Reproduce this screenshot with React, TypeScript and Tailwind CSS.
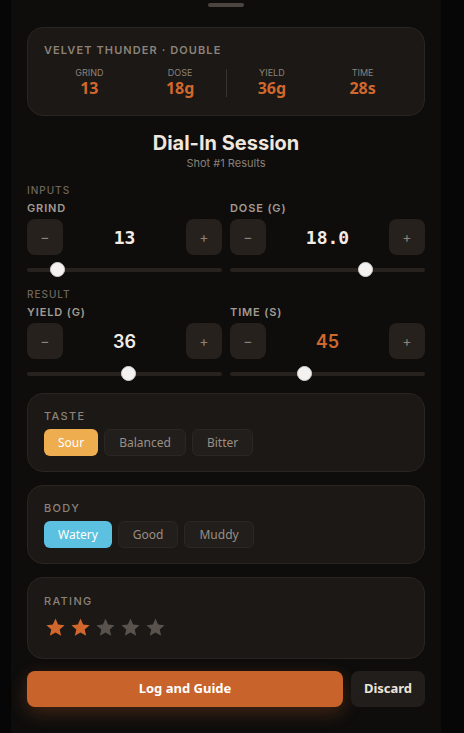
import React from 'react';

const ui = { fontFamily: 'Inter, "Noto Sans", sans-serif' };
const sys = { fontFamily: '"Noto Sans", "Open Sans", sans-serif' };
const mono = { fontFamily: '"DejaVu Sans Mono", "Liberation Mono", monospace' };

function Stepper({ label, value, pos, accent, monoVal }: { label: string; value: string; pos: number; accent?: boolean; monoVal?: boolean }) {
  return (
    <div>
      <div className="text-[11px] font-semibold tracking-[0.08em] text-[#a39a91] leading-none mb-[5px]" style={ui}>
        {label}
      </div>
      <div className="flex items-center justify-between">
        <button className="w-9 h-9 rounded-lg bg-[#26211d] text-[#8c837b] text-sm flex items-center justify-center" style={ui}>
          −
        </button>
        <div
          className={`text-[18px] font-semibold ${accent ? 'text-[#d2672d]' : 'text-[#f2ece6]'}`}
          style={monoVal ? mono : ui}
        >
          {value}
        </div>
        <button className="w-9 h-9 rounded-lg bg-[#26211d] text-[#8c837b] text-sm flex items-center justify-center" style={ui}>
          +
        </button>
      </div>
      <div className="relative h-[15px] mt-[7px] flex items-center">
        <div className="h-[4px] w-full rounded-full bg-[#27221e]" />
        <div
          className="absolute w-[15px] h-[15px] rounded-full bg-[#f4f2f0] border border-[#d8d4d0]"
          style={{ left: `${pos * 180}px` }}
        />
      </div>
    </div>
  );
}

function Chips({ title, items, active, color }: { title: string; items: string[]; active: number; color: string }) {
  return (
    <div className="rounded-2xl bg-[#1b1815] border border-[#2a2521] px-[16px] pt-[17px] pb-[15px]">
      <div className="text-[11px] font-medium tracking-[0.12em] text-[#8c8279] leading-none mb-[7px]" style={ui}>
        {title}
      </div>
      <div className="flex gap-[6px]">
        {items.map((it, i) => (
          <div
            key={it}
            className={`h-[27px] px-[14px] rounded-md flex items-center text-[12px] ${
              i === active ? 'text-white' : 'bg-[#221e1b] border border-[#2c2723] text-[#9a8f85]'
            }`}
            style={{ ...sys, ...(i === active ? { background: color } : {}) }}
          >
            {it}
          </div>
        ))}
      </div>
    </div>
  );
}

function Star({ on }: { on: boolean }) {
  return (
    <svg width="21" height="21" viewBox="0 0 24 24">
      <path
        d="M12 1.8l3 6.9 7.4.6-5.6 4.9 1.7 7.3L12 17.6l-6.5 3.9 1.7-7.3L1.6 9.3 9 8.7z"
        fill={on ? '#d2672d' : '#59524c'}
      />
    </svg>
  );
}

function Stat({ label, value }: { label: string; value: string }) {
  return (
    <div className="text-center">
      <div className="text-[9px] text-[#8c8279] leading-none" style={ui}>
        {label}
      </div>
      <div className="text-[16px] font-bold text-[#d2672d] leading-[20px] mt-[1px]" style={sys}>
        {value}
      </div>
    </div>
  );
}

export default function App() {
  return (
    <div className="w-[464px] h-[733px] bg-[#060606] overflow-hidden">
      <div className="ml-[11px] w-[430px] h-full bg-[#0e0d0c] px-[16px] pt-[3px]">
        <div className="mx-auto w-9 h-[4px] rounded-full bg-[#4a4541]" />

        <div className="mt-[20px] rounded-2xl bg-[#1b1815] border border-[#2a2521] px-[16px] pt-[17px] pb-[17px]">
          <div className="text-[11px] font-semibold tracking-[0.1em] text-[#8c8279] leading-none" style={ui}>
            VELVET THUNDER · DOUBLE
          </div>
          <div className="mt-[12px] flex items-center">
            <div className="flex-1 grid grid-cols-2">
              <Stat label="GRIND" value="13" />
              <Stat label="DOSE" value="18g" />
            </div>
            <div className="w-px h-[28px] bg-[#3a342f]" />
            <div className="flex-1 grid grid-cols-2">
              <Stat label="YIELD" value="36g" />
              <Stat label="TIME" value="28s" />
            </div>
          </div>
        </div>

        <div className="mt-[15px] text-center">
          <div className="text-[20px] font-bold text-[#efe7dd] leading-[24px]" style={ui}>
            Dial-In Session
          </div>
          <div className="text-[11px] text-[#8a8179] leading-none mt-[3px]" style={ui}>
            Shot #1 Results
          </div>
        </div>

        <div className="mt-[16px] text-[10px] font-medium tracking-[0.1em] text-[#6e655d] leading-none mb-[8px]" style={ui}>
          INPUTS
        </div>
        <div className="grid grid-cols-2 gap-2">
          <Stepper label="GRIND" value="13" pos={0.13} monoVal />
          <Stepper label="DOSE (G)" value="18.0" pos={0.71} monoVal />
        </div>

        <div className="mt-[12px] text-[10px] font-medium tracking-[0.1em] text-[#6e655d] leading-none mb-[8px]" style={ui}>
          RESULT
        </div>
        <div className="grid grid-cols-2 gap-2">
          <Stepper label="YIELD (G)" value="36" pos={0.52} />
          <Stepper label="TIME (S)" value="45" pos={0.37} accent />
        </div>

        <div className="mt-[12px] flex flex-col gap-[13px]">
          <Chips title="TASTE" items={['Sour', 'Balanced', 'Bitter']} active={0} color="#eead4f" />
          <Chips title="BODY" items={['Watery', 'Good', 'Muddy']} active={0} color="#5cc1e1" />
          <div className="rounded-2xl bg-[#1b1815] border border-[#2a2521] px-[16px] pt-[18px] pb-[20px]">
            <div className="text-[11px] font-medium tracking-[0.12em] text-[#8c8279] leading-none mb-[10px]" style={ui}>
              RATING
            </div>
            <div className="flex gap-[4px] ml-[1px]">
              <Star on />
              <Star on />
              <Star on={false} />
              <Star on={false} />
              <Star on={false} />
            </div>
          </div>
        </div>

        <div className="mt-[12px] flex gap-2">
          <button
            className="flex-1 h-9 rounded-lg bg-[#c9632c] text-white text-[13px] font-bold shadow-[0_6px_18px_rgba(201,99,44,0.28)]"
            style={sys}
          >
            Log and Guide
          </button>
          <button className="w-[74px] h-9 rounded-lg bg-[#221e1b] text-[#ece4dc] text-[13px] font-bold" style={sys}>
            Discard
          </button>
        </div>
      </div>
    </div>
  );
}
